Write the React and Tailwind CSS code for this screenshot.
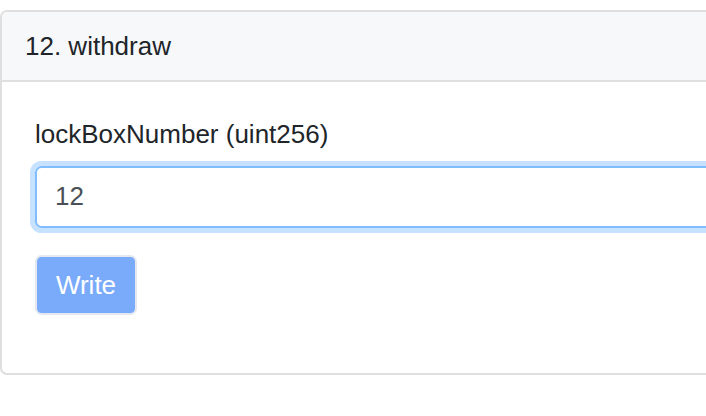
import React from "react";

export default function App() {
  return (
    <div className="w-[706px] h-[416px] overflow-hidden bg-white pt-[10px] font-['Liberation_Sans',Arial,sans-serif] text-[#212529]">
      {/* --- CARD --- */}
      <div className="w-[780px] rounded-[7px] border-2 border-[#dfdfdf] bg-white">
        <div className="h-[70px] flex items-center pl-[23px] bg-[#f7f8fa] border-b-2 border-[#dfdfdf] rounded-t-[5px] text-[26px] leading-[39px]">
          12. withdraw
        </div>

        <div className="pl-[33px] pt-[32.5px] pb-[58px]">
          <label className="block text-[26px] leading-[39px] mb-[12px]">lockBoxNumber (uint256)</label>
          <input
            readOnly
            value="12"
            className="block w-[760px] h-[62px] rounded-[6.5px] border-2 border-[#80bdff] pl-[18px] text-[26px] text-[#495057] outline-none shadow-[0_0_0_5px_rgba(0,123,255,0.22)] font-['Liberation_Sans',Arial,sans-serif]"
          />
          <button className="mt-[27px] h-[60px] w-[102px] rounded-[6.5px] border-2 border-[#e4e9f1] bg-[#7aabfa] text-white text-[26px] leading-none">
            Write
          </button>
        </div>
      </div>
    </div>
  );
}
